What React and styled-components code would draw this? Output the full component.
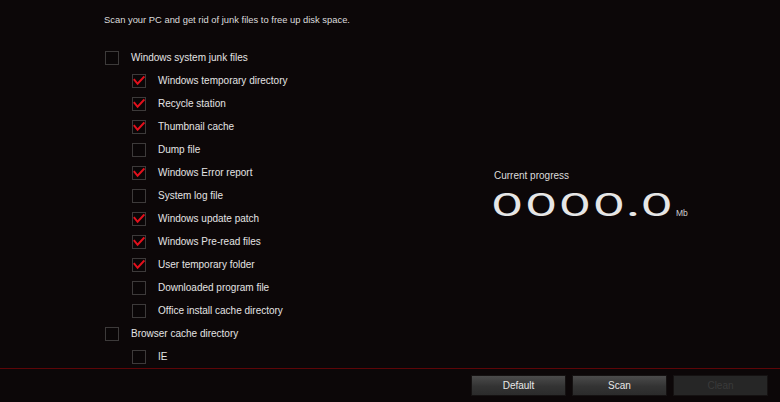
import React from 'react';
import styled, { createGlobalStyle } from 'styled-components';

const GlobalStyle = createGlobalStyle`
  html, body {
    margin: 0;
    padding: 0;
    background: #0c0708;
  }
  body {
    font-family: "Liberation Sans", Arial, sans-serif;
    color: #e2e2e2;
  }
`;

const Window = styled.div`
  width: 780px;
  height: 402px;
  display: flex;
  flex-direction: column;
  background: #0c0708;
  overflow: hidden;
`;

const Main = styled.div`
  height: 368px;
  display: flex;
`;

const ListPane = styled.div`
  width: 390px;
  padding: 14px 0 0 104px;
  box-sizing: border-box;
`;

const Intro = styled.div`
  font-size: 9.4px;
  line-height: 12px;
  color: #dcdcdc;
  margin-bottom: 20px;
`;

const Row = styled.div`
  display: flex;
  align-items: center;
  height: 23px;
  padding-left: ${p => (p.$sub ? 28 : 1)}px;
  font-size: 10px;
  color: #e4e4e4;
`;

const Box = styled.span`
  width: 12px;
  height: 12px;
  border: 1px solid #3d3a3a;
  background: #0a0607;
  margin-right: 12px;
  display: flex;
  align-items: center;
  justify-content: center;
  flex-shrink: 0;
`;

const ProgressPane = styled.div`
  flex: 1;
  display: flex;
  flex-direction: column;
  justify-content: center;
  padding: 19px 0 0 104px;
`;

const ProgressLabel = styled.div`
  font-size: 10px;
  color: #dcdcdc;
  margin-bottom: 11px;
`;

const Counter = styled.div`
  display: flex;
  align-items: flex-end;
`;

const Digits = styled.span`
  font-family: Inter, "Liberation Sans", sans-serif;
  font-weight: 400;
  font-size: 31px;
  line-height: 26px;
  letter-spacing: 1px;
  color: #e6e6e6;
  display: inline-block;
  margin-left: -3px;
  transform: scaleX(1.65);
  transform-origin: left center;
  width: 185px;
`;

const Unit = styled.span`
  font-size: 8.5px;
  color: #cfcfcf;
  line-height: 10px;
`;

const Footer = styled.div`
  flex: 1;
  border-top: 1px solid #5e0608;
  display: flex;
  justify-content: flex-end;
  align-items: flex-start;
  gap: 6px;
  padding: 6px 12px 0 0;
`;

const Button = styled.button`
  width: 95px;
  height: 21px;
  border: 1px solid #151212;
  background: ${p =>
    p.disabled
      ? '#262626'
      : 'linear-gradient(#4b4b4b, #333333 55%, #2b2b2b)'};
  color: ${p => (p.disabled ? '#3a3a3a' : '#e8e8e8')};
  font-family: "Liberation Sans", Arial, sans-serif;
  font-size: 10px;
  padding: 0;
`;

const Check = () => (
  <svg width="12" height="12" viewBox="0 0 12 12">
    <path d="M0.8 4.2 L4.6 8.8 L11.4 1.4" fill="none" stroke="#e3101c" strokeWidth="2" />
  </svg>
);

const items = [
  ['Windows system junk files', false, false],
  ['Windows temporary directory', true, true],
  ['Recycle station', true, true],
  ['Thumbnail cache', true, true],
  ['Dump file', true, false],
  ['Windows Error report', true, true],
  ['System log file', true, false],
  ['Windows update patch', true, true],
  ['Windows Pre-read files', true, true],
  ['User temporary folder', true, true],
  ['Downloaded program file', true, false],
  ['Office install cache directory', true, false],
  ['Browser cache directory', false, false],
  ['IE', true, false],
];

export default function App() {
  return (
    <Window>
      <GlobalStyle />
      <Main>
        <ListPane>
          <Intro>Scan your PC and get rid of junk files to free up disk space.</Intro>
          {items.map(([label, sub, checked]) => (
            <Row key={label} $sub={sub}>
              <Box>{checked && <Check />}</Box>
              {label}
            </Row>
          ))}
        </ListPane>
        <ProgressPane>
          <ProgressLabel>Current progress</ProgressLabel>
          <Counter>
            <Digits>0000.0</Digits>
            <Unit>Mb</Unit>
          </Counter>
        </ProgressPane>
      </Main>
      <Footer>
        <Button>Default</Button>
        <Button>Scan</Button>
        <Button disabled>Clean</Button>
      </Footer>
    </Window>
  );
}
